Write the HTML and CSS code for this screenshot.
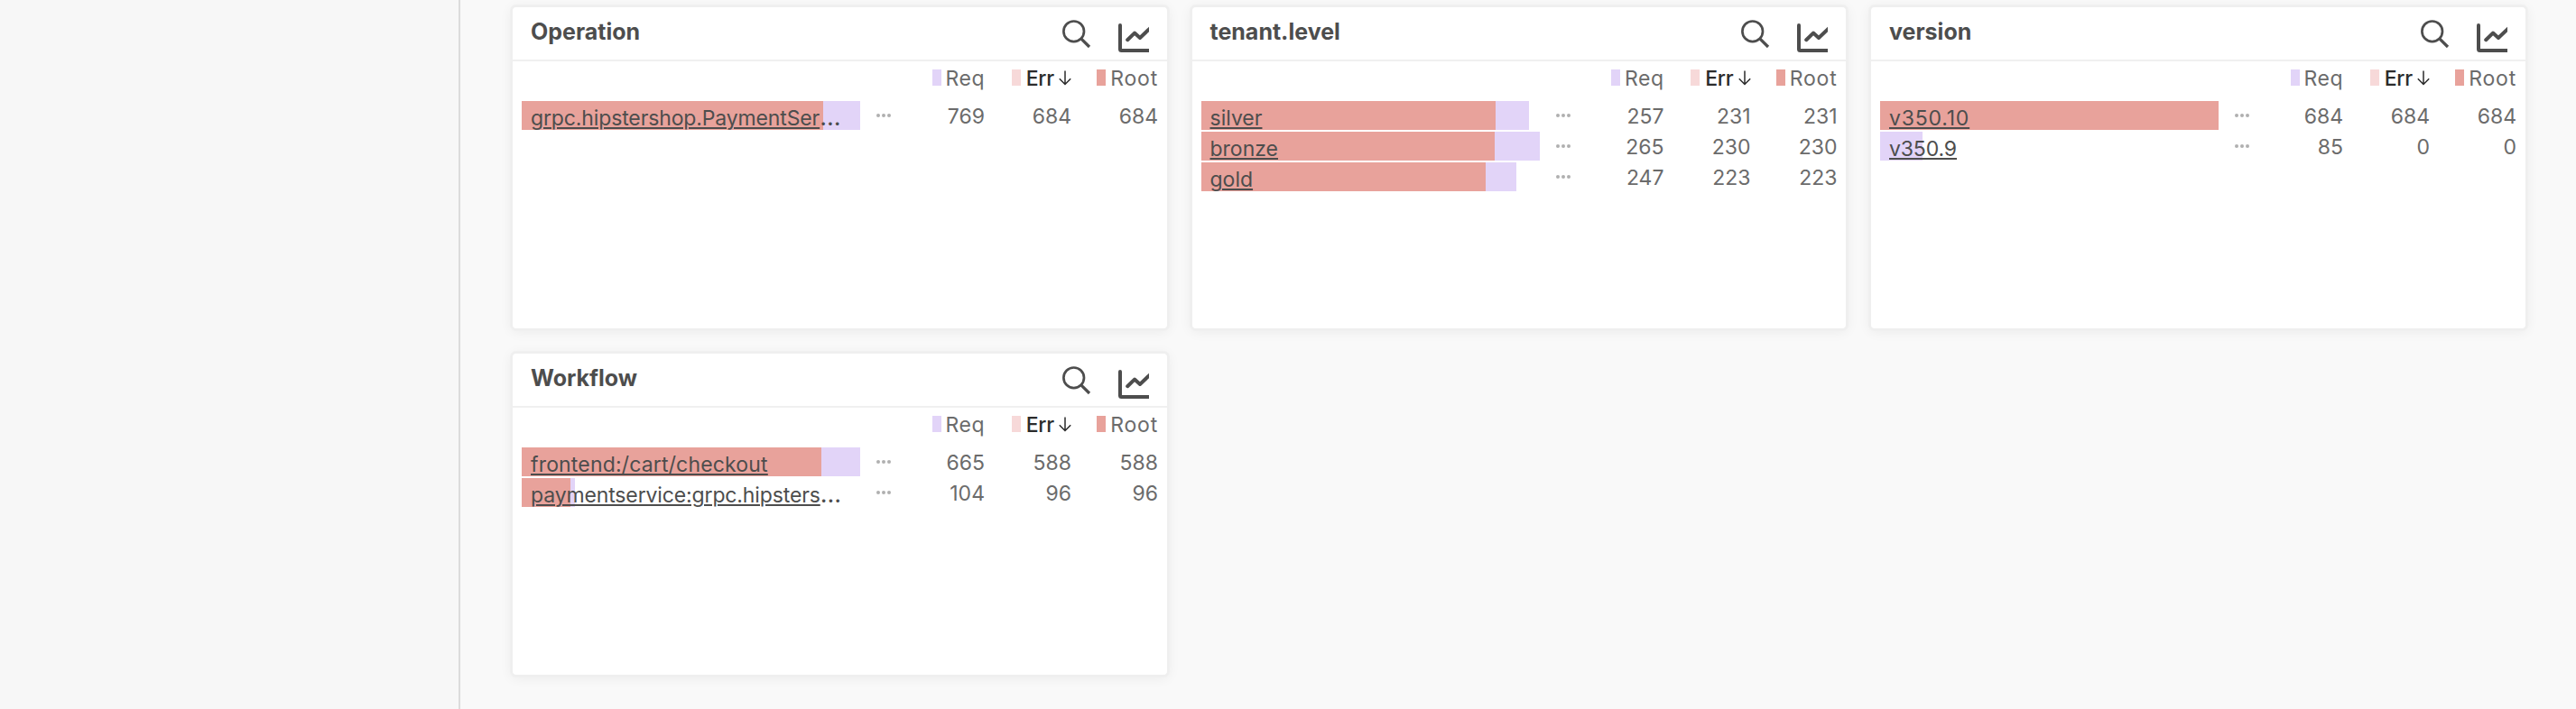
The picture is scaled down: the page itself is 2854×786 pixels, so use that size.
FILE: index.html
```html
<!DOCTYPE html>
<html lang="en">
<head>
<meta charset="utf-8">
<title>Tag breakdown</title>
<link rel="stylesheet" href="styles.css">
</head>
<body>
<svg class="sprite" aria-hidden="true">
  <symbol id="i-search" viewBox="0 0 34 34">
    <circle cx="14.700" cy="14.800" r="11.300" fill="none" stroke="currentColor" stroke-width="2.700"/>
    <path d="M22.800 22.800l9.200 9.200" fill="none" stroke="currentColor" stroke-width="3.200"/>
  </symbol>
  <symbol id="i-chart" viewBox="0 0 34 32">
    <path d="M2 2v26.500a1.500 1.500 0 0 0 1.500 1.500H36" fill="none" stroke="currentColor" stroke-width="4" stroke-linecap="round"/>
    <path d="M10.200 18.200l7.800-7.600 6 5.400 12-11.500" fill="none" stroke="currentColor" stroke-width="4" stroke-linecap="round" stroke-linejoin="round"/>
  </symbol>
  <symbol id="i-down" viewBox="0 0 14 17">
    <path d="M7 .5v15M.8 9.300l6.200 6.200 6.200-6.200" fill="none" stroke="currentColor" stroke-width="1.500"/>
  </symbol>
  <symbol id="i-more" viewBox="0 0 16 4">
    <circle cx="2" cy="2" r="2"/><circle cx="8" cy="2" r="2"/><circle cx="14" cy="2" r="2"/>
  </symbol>
</svg>
<div class="page">
  <aside class="sidebar"></aside>
  <main class="grid" id="grid"></main>
</div>
<script src="cards.js"></script>
</body>
</html>
```
FILE: styles.css
```css
* { box-sizing: border-box; }

body {
  margin: 0;
  font-family: Inter, "Liberation Sans", sans-serif;
  font-size: 23px;
  color: #4d4d4d;
  background: #f9f9f9;
}

.sprite { display: none; }
svg { display: block; }

.page {
  display: flex;
  height: 786px;
  overflow: hidden;
}

.sidebar {
  flex: none;
  width: 510px;
  background: #f7f7f7;
  border-right: 2px solid #dcdcdc;
}

.grid {
  display: grid;
  grid-template-columns: repeat(3, 728.5px);
  grid-auto-rows: 360px;
  align-content: start;
  gap: 24px;
  padding: 6px 0 0 56px;
}

.card {
  background: #fff;
  border: 2px solid #efefef;
  border-radius: 6px;
  box-shadow: 0 0 0 1px #f0f0f0, 0 2px 14px rgba(0, 0, 0, .06);
}

.card-head {
  display: flex;
  height: 60px;
  padding: 0 20px;
  border-bottom: 2px solid #f0f0f0;
}

.card-title {
  flex: 1;
  margin: 0;
  font-size: 25px;
  font-weight: 700;
  line-height: 54px;
}

.icon-search {
  width: 34px;
  height: 34px;
  margin: 12px 30px 0 0;
}

.icon-chart {
  width: 34px;
  height: 32px;
  margin-top: 18px;
}

.legend,
.row {
  display: grid;
  grid-template-columns: 375px 42px 96px 96px 96px;
  padding-left: 10px;
}

.legend {
  height: 44px;
  line-height: 38px;
  color: #6b6b6b;
}

.key {
  display: flex;
  justify-content: flex-end;
  letter-spacing: .5px;
}

.key:first-child { grid-column: 3; }
.key-root { letter-spacing: .8px; }
.key-err {
  color: #2b2b2b;
  font-weight: 500;
  letter-spacing: -.2px;
}

.swatch {
  width: 10px;
  height: 18px;
  margin: 9px 5px 0 0;
}

.swatch-req { background: #e2d4f8; }
.swatch-err {
  margin-right: 6px;
  background: #f7d9d9;
}
.swatch-root { background: #e8a29b; }

.icon-down {
  width: 14px;
  height: 17px;
  margin: 10px 0 0 5px;
}

.row {
  height: 32px;
  margin-bottom: 2px;
}

.bar {
  display: grid;
  height: 32px;
}

.bar > * { grid-area: 1 / 1; }
.bar-req { background: #e2d4f8; }
.bar-root { background: #e8a29b; }

.label {
  padding-left: 10px;
  line-height: 38px;
  height: 32px;
  white-space: nowrap;
}

.name {
  color: inherit;
  text-decoration: underline;
  text-decoration-thickness: 2px;
  text-underline-offset: 2px;
}

.tight { letter-spacing: -.13px; }
.loose { letter-spacing: .17px; }
.digits { letter-spacing: .8px; }

.cut {
  font-size: 27px;
  line-height: 1;
}

.more {
  width: 16px;
  height: 4px;
  margin: 14px 0 0 18px;
  fill: #b0b0b0;
}

.num {
  color: #6b6b6b;
  line-height: 34px;
  text-align: right;
}
```
FILE: cards.js
```js
const cards = [
  { title: 'Operation', max: 769, rows: [
    { name: 'grpc.hipstershop.PaymentSer', cut: true, spacing: 'tight', req: 769, err: 684, root: 684 },
  ] },
  { title: 'tenant.level', max: 265, rows: [
    { name: 'silver', req: 257, err: 231, root: 231 },
    { name: 'bronze', req: 265, err: 230, root: 230 },
    { name: 'gold', req: 247, err: 223, root: 223 },
  ] },
  { title: 'version', max: 684, rows: [
    { name: 'v350.10', spacing: 'digits', req: 684, err: 684, root: 684 },
    { name: 'v350.9', spacing: 'tight', req: 85, err: 0, root: 0 },
  ] },
  { title: 'Workflow', max: 665, rows: [
    { name: 'frontend:/cart/checkout', spacing: 'loose', req: 665, err: 588, root: 588 },
    { name: 'paymentservice:grpc.hipsters', cut: true, spacing: 'tight', req: 104, err: 96, root: 96 },
  ] },
];

const icon = (id, cls) => `<svg class="${cls}"><use href="#${id}"/></svg>`;
const pct = (n, max) => `${(n / max * 100).toFixed(2)}%`;

const row = (r, max) => `
  <div class="row">
    <div class="bar">
      <div class="bar-req" style="width:${pct(r.req, max)}"></div>
      <div class="bar-root" style="width:${pct(r.root, max)}"></div>
      <div class="label"><a class="name ${r.spacing || ''}">${r.name}</a>${r.cut ? '<span class="cut">…</span>' : ''}</div>
    </div>
    ${icon('i-more', 'more')}
    <div class="num">${r.req}</div>
    <div class="num">${r.err}</div>
    <div class="num">${r.root}</div>
  </div>`;

document.getElementById('grid').innerHTML = cards.map(c => `
  <section class="card">
    <header class="card-head">
      <h2 class="card-title">${c.title}</h2>
      ${icon('i-search', 'icon-search')}
      ${icon('i-chart', 'icon-chart')}
    </header>
    <div class="legend">
      <div class="key"><span class="swatch swatch-req"></span>Req</div>
      <div class="key key-err"><span class="swatch swatch-err"></span>Err${icon('i-down', 'icon-down')}</div>
      <div class="key key-root"><span class="swatch swatch-root"></span>Root</div>
    </div>
    ${c.rows.map(r => row(r, c.max)).join('')}
  </section>`).join('');
```
